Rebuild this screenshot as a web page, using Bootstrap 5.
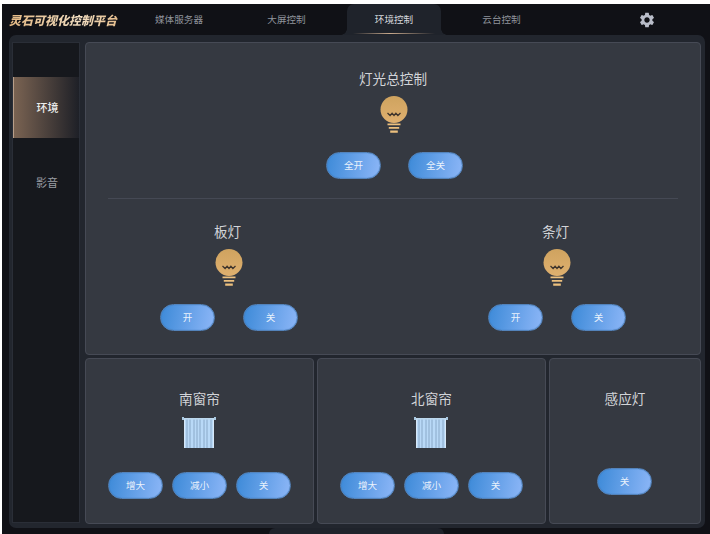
<!DOCTYPE html>
<html lang="zh-CN">
<head>
<meta charset="UTF-8">
<title>灵石可视化控制平台</title>
<link href="https://cdn.jsdelivr.net/npm/bootstrap@5.3.0/dist/css/bootstrap.min.css" rel="stylesheet">
<style>
    html, body { height: 534px; overflow: hidden; }
    body {
        background: #fff;
        padding: 4px 0 0 2px;
        font-family: "Noto Sans CJK SC", "Liberation Sans", sans-serif;
    }
    .app-shell { width: 708px; height: 530px; background: #101116; color: #c9ccd2; }
    .top-bar { height: 31px; }
    .brand-title {
        width: 130px;
        padding-left: 7px;
        font-size: 12px;
        font-weight: 900;
        font-style: italic;
        white-space: nowrap;
        background: linear-gradient(90deg, #e2b57e, #f0dcc0 60%, #e0b27a);
        -webkit-background-clip: text;
        background-clip: text;
        color: transparent;
    }
    .top-tabs { gap: 13.5px; }
    .top-tab { width: 94px; font-size: 9.6px; color: #8f939b; position: relative; }
    .top-tab.current { background: #1f232b; color: #d5d7db; border-radius: 7px 7px 0 0; }
    .top-tab.current::before, .top-tab.current::after {
        content: "";
        position: absolute;
        bottom: 0;
        width: 6px;
        height: 6px;
    }
    .top-tab.current::before { left: -6px; background: radial-gradient(circle at 0 0, #101116 5.5px, #1f232b 6px); }
    .top-tab.current::after { right: -6px; background: radial-gradient(circle at 100% 0, #101116 5.5px, #1f232b 6px); }
    .tab-glow {
        position: absolute;
        left: 6px;
        right: 6px;
        bottom: 1px;
        height: 1px;
        background: linear-gradient(90deg, transparent, #c8a98c 45%, transparent);
    }
    .gear-slot { margin-left: 89.500px; line-height: 0; }
    .frame {
        margin: 0 5px 0 7px;
        height: 493px;
        background: #22262e;
        border-radius: 7px;
        padding: 7px 4px 4px 3px;
        gap: 5px;
    }
    .side-menu {
        width: 68px;
        margin-bottom: 1px;
        background: #16181d;
        border: 1px solid #2a2e37;
        padding-top: 34px;
        gap: 14px;
    }
    .side-item { height: 61px; font-size: 11px; color: #9a9da4; padding-left: 2px; }
    .side-item.current {
        color: #eceded;
        font-weight: 500;
        background: linear-gradient(90deg, #7a6352, #1e2027);
        border-left: 1px solid #b89f8a;
    }
    .panels { width: 616px; gap: 3px; }
    .panel-box {
        background: #353941;
        border: 1px solid #464a55;
        border-radius: 4px;
    }
    .panel-main { height: 313px; padding: 25px 22px 0; }
    .panel-low { height: 166px; padding-top: 29px; }
    .panel-row { gap: 3px; }
    .panel-title { font-size: 13.6px; line-height: 20px; color: #d2d4d8; }
    .light-title { margin-right: 3px; }
    .glow-bulb { display: block; margin-top: 8px; }
    .master-bulb { margin-left: 2px; }
    .pill-row { margin-top: 18px; }
    .master-row { gap: 27px; margin-left: 3px; }
    .light-row { gap: 28px; margin-top: 17px; }
    .pill-btn {
        width: 55px;
        height: 27px;
        padding: 0;
        font-size: 9.6px;
        color: rgba(255, 255, 255, .88);
        border: 1px solid #5383bb;
        border-radius: 14px;
        background: linear-gradient(100deg, #3d8ad8, #8cb6f7);
        box-shadow: inset 0 0 1px #2e6aa8;
    }
    .split-line { height: 1px; background: #454954; margin: 19px 0 22px; }
    .light-col { width: 242px; }
    .blind-icon { display: block; margin: 9px 2px 0 0; }
    .blind-row { margin-top: 23px; gap: 9px; }
    .sensor-btn { margin: 60px 1px 0 0; }
    .foot-tab { width: 175px; height: 6px; margin: 0 auto; background: #1f232b; border-radius: 6px 6px 0 0; }
</style>
</head>
<body>
<svg width="0" height="0" class="position-absolute">
    <defs>
        <linearGradient id="bulbFill" x1="0" y1="0" x2="0" y2="1">
            <stop offset="0" stop-color="#cfa35f"/>
            <stop offset="1" stop-color="#dfb06f"/>
        </linearGradient>
        <symbol id="bulb" viewBox="0 0 28 38">
            <circle cx="14" cy="13.5" r="13.5" fill="url(#bulbFill)"/>
            <path d="M7.500 17l2.600 2.500 2-2.200 1.900 2.200 1.900-2.200 2 2.200 2.600-2.500" fill="none" stroke="#40362d" stroke-width="1.300"/>
            <path d="M7.500 27.500h13v1.800h-13zM8.800 31h10.400v1.800H8.800zM10.200 34.500h7.600v2.200h-7.600z" fill="#ecc07e"/>
        </symbol>
        <symbol id="blind" viewBox="0 0 34 32">
            <rect x="2" y="2" width="30" height="29" fill="#b9d9f7"/>
            <path d="M5 2v29M8 2v29M12 2v29M15 2v29M18 2v29M22 2v29M25 2v29M29 2v29" stroke="#8aa9c8" stroke-width="1"/>
            <path d="M2.500 2v29M31.500 2v29" stroke="#d7e8f8" stroke-width="1"/>
            <rect x="0" y="1" width="34" height="1.600" fill="#bcd8ee"/>
            <rect x="0" y="0" width="2" height="3" fill="#a9c8e0"/>
            <rect x="32" y="0" width="2" height="3" fill="#a9c8e0"/>
        </symbol>
    </defs>
</svg>

<div class="app-shell">
    <!-- Top bar -->
    <div class="top-bar d-flex align-items-stretch">
        <div class="brand-title d-flex align-items-center">灵石可视化控制平台</div>
        <div class="top-tabs d-flex align-items-stretch">
            <div class="top-tab d-flex align-items-center justify-content-center">媒体服务器</div>
            <div class="top-tab d-flex align-items-center justify-content-center">大屏控制</div>
            <div class="top-tab current d-flex align-items-center justify-content-center">环境控制<span class="tab-glow"></span></div>
            <div class="top-tab d-flex align-items-center justify-content-center">云台控制</div>
        </div>
        <div class="gear-slot d-flex align-items-center">
            <svg width="18" height="18" viewBox="0 0 24 24">
                <path fill="#b9bdc9" d="M19.140 12.940c.04-.3.06-.61.06-.94 0-.32-.02-.64-.07-.94l2.030-1.580a.49.49 0 0 0 .12-.61l-1.920-3.320a.49.49 0 0 0-.59-.22l-2.390.96c-.5-.38-1.030-.7-1.620-.94l-.36-2.540a.48.48 0 0 0-.48-.41h-3.840c-.24 0-.43.17-.47.41l-.36 2.540c-.59.24-1.130.57-1.620.94l-2.390-.96c-.22-.08-.47 0-.59.22L2.740 8.870c-.12.21-.08.47.12.61l2.030 1.580c-.05.3-.09.63-.09.94s.02.64.07.94l-2.030 1.580a.49.49 0 0 0-.12.61l1.920 3.320c.12.22.37.29.59.22l2.390-.96c.5.38 1.030.7 1.620.94l.36 2.540c.05.24.24.41.48.41h3.840c.24 0 .44-.17.47-.41l.36-2.540c.59-.24 1.130-.56 1.620-.94l2.390.96c.22.08.47 0 .59-.22l1.920-3.320c.12-.22.07-.47-.12-.61l-2.010-1.580zM12 15.600c-1.980 0-3.600-1.620-3.600-3.600s1.620-3.600 3.600-3.600 3.600 1.620 3.600 3.600-1.620 3.600-3.600 3.600z"/>
            </svg>
        </div>
    </div>

    <!-- Main frame -->
    <div class="frame d-flex">
        <div class="side-menu d-flex flex-column">
            <div class="side-item current d-flex align-items-center justify-content-center">环境</div>
            <div class="side-item d-flex align-items-center justify-content-center">影音</div>
        </div>
        <div class="panels d-flex flex-column">
            <div class="panel-box panel-main">
                <div class="d-flex flex-column align-items-center">
                    <div class="panel-title">灯光总控制</div>
                    <svg class="glow-bulb master-bulb" width="28" height="38"><use href="#bulb"/></svg>
                    <div class="pill-row master-row d-flex">
                        <button class="pill-btn" type="button">全开</button>
                        <button class="pill-btn" type="button">全关</button>
                    </div>
                </div>
                <div class="split-line"></div>
                <div class="d-flex justify-content-between">
                    <div class="light-col d-flex flex-column align-items-center">
                        <div class="panel-title light-title">板灯</div>
                        <svg class="glow-bulb" width="28" height="38"><use href="#bulb"/></svg>
                        <div class="light-row d-flex">
                            <button class="pill-btn" type="button">开</button>
                            <button class="pill-btn" type="button">关</button>
                        </div>
                    </div>
                    <div class="light-col d-flex flex-column align-items-center">
                        <div class="panel-title light-title">条灯</div>
                        <svg class="glow-bulb" width="28" height="38"><use href="#bulb"/></svg>
                        <div class="light-row d-flex">
                            <button class="pill-btn" type="button">开</button>
                            <button class="pill-btn" type="button">关</button>
                        </div>
                    </div>
                </div>
            </div>
            <div class="panel-row d-flex">
                <div class="panel-box panel-low flex-fill d-flex flex-column align-items-center">
                    <div class="panel-title">南窗帘</div>
                    <svg class="blind-icon" width="34" height="32"><use href="#blind"/></svg>
                    <div class="blind-row d-flex">
                        <button class="pill-btn" type="button">增大</button>
                        <button class="pill-btn" type="button">减小</button>
                        <button class="pill-btn" type="button">关</button>
                    </div>
                </div>
                <div class="panel-box panel-low flex-fill d-flex flex-column align-items-center">
                    <div class="panel-title">北窗帘</div>
                    <svg class="blind-icon" width="34" height="32"><use href="#blind"/></svg>
                    <div class="blind-row d-flex">
                        <button class="pill-btn" type="button">增大</button>
                        <button class="pill-btn" type="button">减小</button>
                        <button class="pill-btn" type="button">关</button>
                    </div>
                </div>
                <div class="panel-box panel-low flex-shrink-0 d-flex flex-column align-items-center" style="width: 152px">
                    <div class="panel-title">感应灯</div>
                    <button class="pill-btn sensor-btn" type="button">关</button>
                </div>
            </div>
        </div>
    </div>
    <div class="foot-tab"></div>
</div>
<script src="https://cdn.jsdelivr.net/npm/bootstrap@5.3.0/dist/js/bootstrap.bundle.min.js"></script>
</body>
</html>
